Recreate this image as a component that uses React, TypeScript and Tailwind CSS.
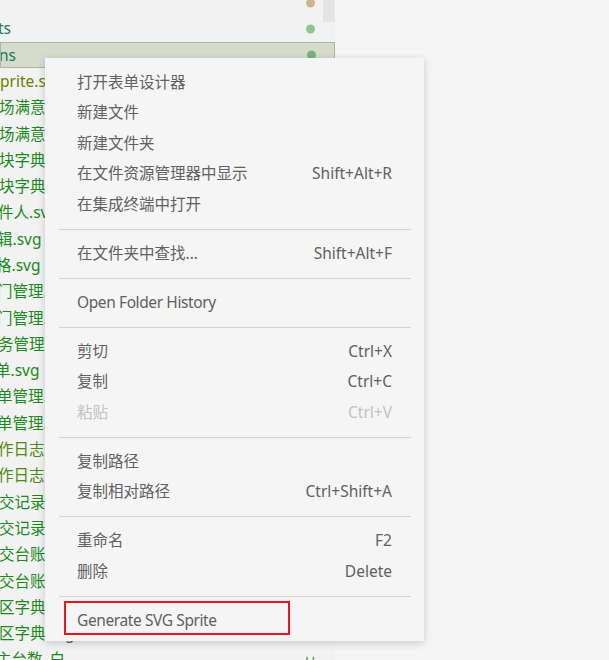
const font = {
  fontFamily: '"Segoe UI", "Noto Sans", "Noto Sans CJK SC", sans-serif',
};

type Row = { text: string; color: string; shift: number; dot?: string; badge?: string; selected?: boolean };

const rows: Row[] = [
  { text: "", color: "#1a8a1a", shift: 0, dot: "#cdb68e" },
  { text: "ts", color: "#1e7a55", shift: -2, dot: "#90c592" },
  { text: "ns", color: "#1e7a55", shift: -2, dot: "#78b47a", selected: true },
  { text: "prite.svg", color: "#6f7f00", shift: 0 },
  { text: "场满意度.svg", color: "#1a8a1a", shift: -1 },
  { text: "场满意度.svg", color: "#1a8a1a", shift: -1 },
  { text: "块字典.svg", color: "#1a8a1a", shift: -1 },
  { text: "块字典.svg", color: "#1a8a1a", shift: -1 },
  { text: "件人.svg", color: "#1a8a1a", shift: -2 },
  { text: "辑.svg", color: "#1a8a1a", shift: -3 },
  { text: "格.svg", color: "#1a8a1a", shift: -4 },
  { text: "门管理.svg", color: "#1a8a1a", shift: -3 },
  { text: "门管理.svg", color: "#1a8a1a", shift: -3 },
  { text: "务管理.svg", color: "#1a8a1a", shift: -2 },
  { text: "单.svg", color: "#1a8a1a", shift: -5 },
  { text: "单管理.svg", color: "#1a8a1a", shift: -3 },
  { text: "单管理.svg", color: "#1a8a1a", shift: -3 },
  { text: "作日志.svg", color: "#4f8a10", shift: -2 },
  { text: "作日志.svg", color: "#4f8a10", shift: -2 },
  { text: "交记录.svg", color: "#1a8a1a", shift: -1 },
  { text: "交记录.svg", color: "#1a8a1a", shift: -1 },
  { text: "交台账.svg", color: "#1a8a1a", shift: -1 },
  { text: "交台账.svg", color: "#1a8a1a", shift: -1 },
  { text: "区字典.svg", color: "#1a8a1a", shift: -1 },
  { text: "区字典.svg", color: "#1a8a1a", shift: -1 },
  { text: "主台数_白", color: "#1a8a1a", shift: -4, badge: "U" },
];

type Item = { label: string; shortcut?: string; disabled?: boolean } | "sep";

const menu: Item[] = [
  { label: "打开表单设计器" },
  { label: "新建文件" },
  { label: "新建文件夹" },
  { label: "在文件资源管理器中显示", shortcut: "Shift+Alt+R" },
  { label: "在集成终端中打开" },
  "sep",
  { label: "在文件夹中查找...", shortcut: "Shift+Alt+F" },
  "sep",
  { label: "Open Folder History" },
  "sep",
  { label: "剪切", shortcut: "Ctrl+X" },
  { label: "复制", shortcut: "Ctrl+C" },
  { label: "粘贴", shortcut: "Ctrl+V", disabled: true },
  "sep",
  { label: "复制路径" },
  { label: "复制相对路径", shortcut: "Ctrl+Shift+A" },
  "sep",
  { label: "重命名", shortcut: "F2" },
  { label: "删除", shortcut: "Delete" },
  "sep",
  { label: "Generate SVG Sprite" },
];

const isLatin = (s: string) => /^[\x20-\x7e]+$/.test(s);

export default function App() {
  return (
    <div className="relative flex h-[660px] w-[609px] overflow-hidden bg-[#f5f5f5]" style={font}>
      {/* explorer tree */}
      <div className="relative w-[335px] shrink-0 bg-[#f2f2f2]">
        <div className="-mt-[10.5px]">
          {rows.map((row, i) => (
            <div
              key={i}
              className={`relative flex h-[26.3px] items-center overflow-hidden text-[15.5px] ${
                row.selected ? "border border-[#a9b89b] bg-[#d5dccb]" : ""
              }`}
            >
              <span className="whitespace-nowrap" style={{ color: row.color, marginLeft: row.shift }}>
                {row.text}
              </span>
              {row.dot && (
                <span
                  className="absolute left-[305.5px] top-1/2 h-[9px] w-[9px] -translate-y-1/2 rounded-full"
                  style={{ backgroundColor: row.dot }}
                />
              )}
              {row.badge && (
                <span className="absolute left-[305px] top-[4px] text-[14px] text-[#3f9a3f]">{row.badge}</span>
              )}
            </div>
          ))}
        </div>
        <div className="absolute right-0 top-0 h-[22px] w-[12px] bg-[#e4e4e4]" />
      </div>

      {/* context menu */}
      <div className="absolute left-[45px] top-[58px] w-[379px] bg-[#f5f5f5] pt-[9.25px] pb-[5.5px] shadow-[0_2px_8px_rgba(0,0,0,0.18)]">
        {menu.map((item, i) =>
          item === "sep" ? (
            <div key={i} className="flex h-[18.5px] items-center pl-[14px] pr-[13px]">
              <div className="h-px w-full bg-[#d4d4d4]" />
            </div>
          ) : (
            <div
              key={i}
              className={`flex h-[30.5px] items-center justify-between pl-[32px] pr-[32px] text-[15.5px] ${
                item.disabled ? "text-[#c2c2c2]" : "text-[#616161]"
              }`}
            >
              <span className={isLatin(item.label) ? "tracking-[-0.4px]" : ""}>{item.label}</span>
              {item.shortcut && <span>{item.shortcut}</span>}
            </div>
          )
        )}
      </div>

      {/* highlight box */}
      <div className="absolute left-[64px] top-[600.5px] h-[34.5px] w-[225.5px] border-2 border-[#e8141f]" />
    </div>
  );
}
